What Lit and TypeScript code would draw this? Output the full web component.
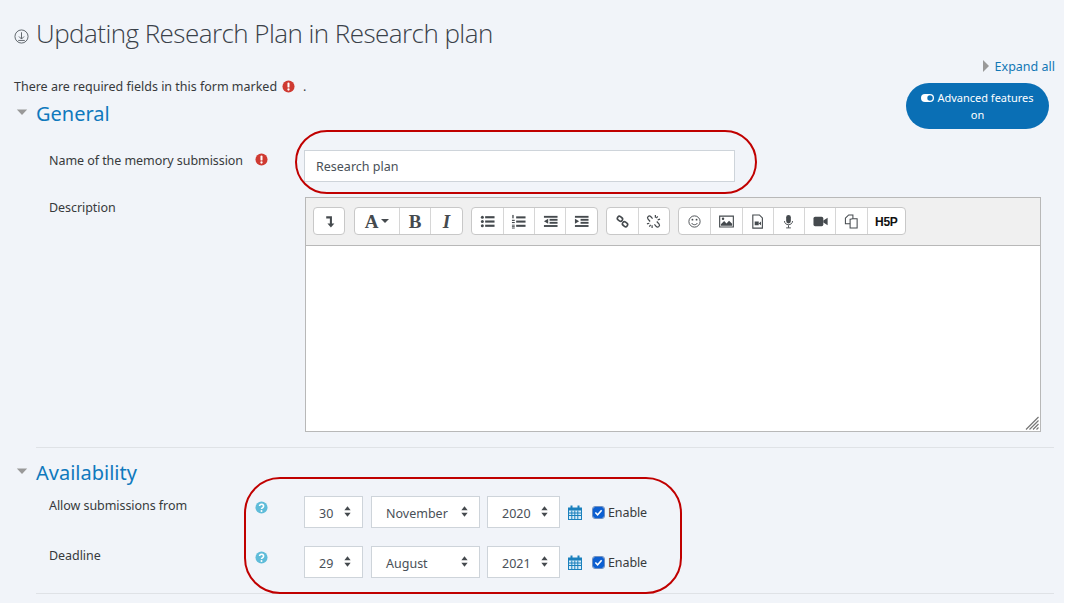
import { LitElement, html, css, svg } from "lit";
import { customElement } from "lit/decorators.js";

const alertIcon = html`<svg class="alert" viewBox="0 0 14 14"><circle cx="7" cy="7" r="6.5" fill="#cf3a32"/><rect x="5.9" y="2.8" width="2.2" height="5.4" rx="1" fill="#fff"/><circle cx="7" cy="10.2" r="1.25" fill="#fff"/></svg>`;
const helpIcon = html`<svg class="alert" viewBox="0 0 14 14"><circle cx="7" cy="7" r="6.5" fill="#5fbcd9"/><path d="M4.9 5.4a2.2 2 0 1 1 3.3 1.8c-.8.5-1.2.8-1.2 1.5" fill="none" stroke="#fff" stroke-width="1.7"/><circle cx="7" cy="10.7" r="1.05" fill="#fff"/></svg>`;
const caret = html`<svg class="caret" viewBox="0 0 14 8"><path d="M1 .5h12L7 7z" fill="#999"/></svg>`;
const updown = html`<svg class="ud" viewBox="0 0 8 12"><path d="M4 0l3.6 4.5H.4zM4 12L.4 7.5h7.2z" fill="#454a4e"/></svg>`;
const calendar = html`<svg class="cal" viewBox="0 0 14 15"><path d="M0 2.5h14V15H0z" fill="#1a80bd"/><path d="M1 5.5h12V14H1z" fill="#d8ecf8"/><path d="M1 8h12M1 10.5h12M3.8 5.5V14M6.8 5.5V14M9.8 5.5V14" stroke="#1a80bd" fill="none"/><path d="M3.5.5v3M10.5.5v3" stroke="#1a80bd" stroke-width="2" fill="none"/></svg>`;

const ic = (body: unknown, w = 16) => html`<svg class="ico" width="${w}" height="16" viewBox="0 0 16 16">${body}</svg>`;
const c = "#454a4e";
const icons = {
  collapse: ic(svg`<path d="M4.5 3.6h5V11" fill="none" stroke="${c}" stroke-width="2.2"/><path d="M5.8 10h7.4L9.5 14.5z" fill="${c}"/>`),
  ul: ic(svg`<g fill="${c}"><circle cx="2.5" cy="3.5" r="1.6"/><circle cx="2.5" cy="8" r="1.6"/><circle cx="2.5" cy="12.5" r="1.6"/><rect x="5.5" y="2.3" width="10" height="2.3"/><rect x="5.5" y="6.9" width="10" height="2.3"/><rect x="5.5" y="11.4" width="10" height="2.3"/></g>`),
  ol: ic(svg`<g fill="${c}"><rect x="5.5" y="2.5" width="10" height="2.2"/><rect x="5.5" y="7" width="10" height="2.2"/><rect x="5.5" y="11.5" width="10" height="2.2"/><rect x="1.4" y="1" width="1.4" height="3.6"/><rect x="1" y="6.2" width="3" height="1.2"/><rect x="1" y="8.5" width="3" height="1.2"/><rect x="1" y="11.4" width="3" height="1"/><rect x="1" y="13" width="3" height="1"/><rect x="1" y="14.5" width="3" height="1"/></g>`),
  outdent: ic(svg`<g fill="${c}"><rect x="1" y="2" width="14.5" height="2"/><rect x="7" y="5.2" width="8.5" height="2"/><rect x="7" y="8.4" width="8.5" height="2"/><rect x="1" y="11.8" width="14.5" height="2"/><path d="M5.5 5v5.5L1 7.8z"/></g>`),
  indent: ic(svg`<g fill="${c}"><rect x="1" y="2" width="14.5" height="2"/><rect x="7" y="5.2" width="8.5" height="2"/><rect x="7" y="8.4" width="8.5" height="2"/><rect x="1" y="11.8" width="14.5" height="2"/><path d="M1 5v5.5L5.5 7.8z"/></g>`),
  link: ic(svg`<g fill="none" stroke="${c}" stroke-width="1.7"><rect x="2.4" y="3" width="5.8" height="4.2" rx="2" transform="rotate(38 5.3 5.1)"/><rect x="7.8" y="8.8" width="5.8" height="4.2" rx="2" transform="rotate(38 10.7 10.9)"/></g>`),
  unlink: ic(svg`<g fill="none" stroke="${c}" stroke-width="1.3"><path d="M7 5L5 2.7a2 2 0 0 0-3 2.6L4.4 8M9 11l2 2.4a2 2 0 0 0 3-2.6L11.5 8"/><path d="M10 1v3M12.5 2.5l-1.5 2M15 5.5l-2.5.8M1 10.5l2.5-.6M3.5 13.5l1.5-2M6.5 15v-3"/></g>`),
  smile: ic(svg`<g fill="none" stroke="${c}" stroke-width="1"><circle cx="8" cy="8" r="6"/><path d="M4.8 9.6c1.6 2.4 4.8 2.4 6.4 0"/></g><circle cx="5.8" cy="6" r="1" fill="${c}"/><circle cx="10.2" cy="6" r="1" fill="${c}"/>`),
  image: ic(svg`<path d="M.7 2.2h14.6v11.6H.7z" fill="#fff" stroke="${c}" stroke-width="1.2"/><path d="M2 12.6V11l3.5-3.5 2.5 2.5 2.7-2.8 3.3 3.2v2.2z" fill="${c}"/><circle cx="4.3" cy="5" r="1.3" fill="${c}"/>`),
  file: ic(svg`<path d="M3 1h7l3.2 3.2V15H3z" fill="#fff" stroke="${c}" stroke-width="1.2"/><rect x="5" y="8" width="4.3" height="4" fill="${c}"/><path d="M9.3 10l2.4-2v4z" fill="${c}"/>`),
  mic: ic(svg`<rect x="5.5" y="1" width="5" height="9" rx="2.5" fill="${c}"/><path d="M3.7 7.5c0 5.2 8.6 5.2 8.6 0M8 12v2.6M5.5 14.8h5" fill="none" stroke="${c}" stroke-width="1"/>`),
  video: ic(svg`<rect x=".5" y="3" width="10.5" height="10" rx="1.8" fill="${c}"/><path d="M11 7l4.6-3v8L11 9z" fill="${c}"/>`),
  copy: ic(svg`<g fill="#fff" stroke="${c}" stroke-width="1.1"><path d="M1.5 4.5L5 1h4.5v9.5h-8z"/><path d="M6.5 5.5L9.5 5h4.5v10H6.5z"/></g>`),
};

@customElement("app-root")
export class AppRoot extends LitElement {
  static styles = css`
    :host { display: block; width: 1069px; height: 603px; background: #fff; overflow: hidden; font-family: "Noto Sans", sans-serif; color: #373a3c; font-size: 12.5px; }
    .page { position: relative; width: 1064px; height: 603px; background: #f1f4f9; box-sizing: border-box; padding: 18px 10px 0 14px; }
    svg { display: block; flex: none; }
    .title { display: flex; align-items: center; gap: 7px; height: 32px; padding-bottom: 2px; box-sizing: border-box; }
    .title svg { width: 15px; height: 15px; margin-top: 6px; }
    h2 { margin: 0; font-weight: 300; font-size: 26px; line-height: 32px; color: #3a4149; font-family: "Open Sans", sans-serif; letter-spacing: -0.545px; white-space: nowrap; }
    .top { display: flex; justify-content: space-between; height: 80px; }
    .top-left { padding-top: 27px; }
    .req-line { display: flex; align-items: center; height: 18px; letter-spacing: -.01px; }
    .req-line .alert { margin: 0 8px 0 5px; }
    .alert { width: 13px; height: 13px; }
    .sect { display: flex; align-items: center; height: 30px; }
    .top-left .sect { margin-top: 4px; }
    .sect .caret { width: 12px; height: 7px; margin: 0 8px 4px 2px; }
    .sect span { font-size: 20px; color: #0f79bd; line-height: 30px; }
    .top-right { display: flex; flex-direction: column; align-items: flex-end; padding-top: 7px; }
    .expand { display: flex; align-items: center; gap: 6px; color: #1177b5; height: 18px; margin-right: -1px; }
    .expand i { width: 0; height: 0; border-left: 6px solid #999; border-top: 6px solid transparent; border-bottom: 6px solid transparent; }
    .adv { width: 143px; height: 46px; border-radius: 23px; background: #0a6fb5; color: #fff; font-size: 11px; margin: 8px 5px 0 0; display: flex; flex-direction: column; align-items: center; justify-content: center; line-height: 17px; }
    .adv div { display: flex; align-items: center; gap: 3px; }
    .adv svg { width: 13px; height: 8px; }
    .row { display: grid; grid-template-columns: 206px 49px 1fr; margin-left: 35px; }
    .lab { white-space: nowrap; letter-spacing: -.06px; line-height: 18px; padding-top: 2px; }
    .input { width: 431px; height: 32px; box-sizing: border-box; background: #fff; border: 1px solid #ced4da; padding: 1px 0 0 11px; line-height: 30px; font-size: 12.5px; color: #495057; }
    .r1 { padding-top: 20px; }
    .r1 .ic { padding-top: 3px; }
    .r2 { margin-top: 15px; }
    .editor { width: 736px; box-sizing: border-box; margin-left: 1px; border: 1px solid #b8b8b8; }
    .bar { height: 48px; box-sizing: border-box; background: #f0f0f0; border-bottom: 1px solid #b8b8b8; display: flex; gap: 8px; padding: 9px 0 0 7px; }
    .grp { display: flex; height: 28px; box-sizing: border-box; border: 1px solid #c8c8c8; border-radius: 4px; background: #fff; }
    .grp.first .btn { width: 30px; }
    .grp.second { margin-left: 1px; }
    .btn { width: 31.25px; display: flex; align-items: center; justify-content: center; border-left: 1px solid #d6d6d6; box-sizing: border-box; color: #454a4e; font: 700 19px/1 "Liberation Serif", serif; }
    .btn:first-child { border-left: 0; }
    .btn .ico { width: 15px; height: 15px; }
    .btn.wide { width: 44px; gap: 3px; }
    .btn.it { font-style: italic; }
    .btn.h5p { font: 900 12px/1 "Liberation Sans", sans-serif; color: #111; letter-spacing: -.3px; width: 38.5px; padding-top: 2px; }
    .btn i { border-top: 4px solid #454a4e; border-left: 4px solid transparent; border-right: 4px solid transparent; }
    .area { position: relative; height: 185px; background: #fff; }
    .grip { position: absolute; right: 1px; bottom: 1px; width: 14px; height: 14px; }
    hr { border: 0; border-top: 1px solid #dfe2e6; margin: 0 0 0 22px; }
    .h1 { margin-top: 15px; }
    .sect2 { margin-top: 10px; }
    .dates { padding-top: 8px; }
    .r3 { height: 50px; align-items: start; }
    .r3 .lab { padding-top: 1px; }
    .r3 .ic { padding-top: 5px; }
    .sel-row { display: flex; align-items: center; height: 32px; }
    .sel { height: 32px; box-sizing: border-box; background: #fff; border: 1px solid #ced4da; display: flex; align-items: center; justify-content: space-between; color: #495057; margin-right: 8px; padding: 0 11px 0 14px; }
    .sel span { padding-top: 2px; }
    .sel .ud { width: 7px; height: 11px; margin-top: -1px; }
    .d { width: 59px; } .m { width: 109px; margin-right: 7px; } .y { width: 73px; margin-right: 8px; }
    .cal { width: 14px; height: 15px; }
    .chk { width: 11px; height: 11px; margin: 0 4px 0 11px; background: #0d5fd1; border-radius: 2px; display: flex; align-items: center; justify-content: center; outline: 1px solid #6e8fc0; }
    .chk svg { width: 9px; height: 9px; }
    .en { letter-spacing: -.1px; }
    .hr2 { margin-top: -3px; }
    .oval { position: absolute; box-sizing: border-box; border: 2px solid #c00000; pointer-events: none; }
    .o1 { left: 295px; top: 130px; width: 462px; height: 64px; border-radius: 32px; }
    .o2 { left: 244px; top: 477px; width: 438px; height: 117px; border-radius: 36px; }
  `;

  private dateRow(label: string, d: string, m: string, y: string) {
    return html`<div class="row r3">
      <div class="lab">${label}</div>
      <div class="ic">${helpIcon}</div>
      <div class="sel-row">
        <div class="sel d"><span>${d}</span>${updown}</div>
        <div class="sel m"><span>${m}</span>${updown}</div>
        <div class="sel y"><span>${y}</span>${updown}</div>
        ${calendar}
        <div class="chk"><svg viewBox="0 0 10 10"><path d="M1.5 5l2.5 2.5 4.5-5" fill="none" stroke="#fff" stroke-width="1.8"/></svg></div>
        <span class="en">Enable</span>
      </div>
    </div>`;
  }

  render() {
    return html`<div class="page">
      <div class="title">
        <svg viewBox="0 0 16 16"><g fill="none" stroke="#5a6066" stroke-width="1"><circle cx="8" cy="8" r="7"/><path d="M8 3.5v7M5.3 8L8 10.7 10.7 8M4.5 12.2h7"/></g></svg>
        <h2>Updating Research Plan in Research plan</h2>
      </div>
      <div class="top">
        <div class="top-left">
          <div class="req-line">There are required fields in this form marked ${alertIcon} .</div>
          <div class="sect">${caret}<span>General</span></div>
        </div>
        <div class="top-right">
          <div class="expand"><i></i>Expand all</div>
          <div class="adv">
            <div><svg viewBox="0 0 13 8"><rect width="13" height="8" rx="4" fill="#fff"/><circle cx="9" cy="4" r="2.7" fill="#0a6fb5"/></svg>Advanced features</div>
            on
          </div>
        </div>
      </div>
      <div class="row r1">
        <div class="lab">Name of the memory submission</div>
        <div class="ic">${alertIcon}</div>
        <div class="input">Research plan</div>
      </div>
      <div class="row r2">
        <div class="lab">Description</div>
        <div></div>
        <div class="editor">
          <div class="bar">
            <div class="grp first"><div class="btn">${icons.collapse}</div></div>
            <div class="grp second"><div class="btn wide">A<i></i></div><div class="btn">B</div><div class="btn it">I</div></div>
            <div class="grp"><div class="btn">${icons.ul}</div><div class="btn">${icons.ol}</div><div class="btn">${icons.outdent}</div><div class="btn">${icons.indent}</div></div>
            <div class="grp"><div class="btn">${icons.link}</div><div class="btn">${icons.unlink}</div></div>
            <div class="grp"><div class="btn">${icons.smile}</div><div class="btn">${icons.image}</div><div class="btn">${icons.file}</div><div class="btn">${icons.mic}</div><div class="btn">${icons.video}</div><div class="btn">${icons.copy}</div><div class="btn h5p">H5P</div></div>
          </div>
          <div class="area"><svg class="grip" viewBox="0 0 14 14"><path d="M13.5 1L1 13.5M13.5 4.5L4.5 13.5M13.5 8L8 13.5M13.5 11.5L11.5 13.5" stroke="#777" stroke-width="1.2"/></svg></div>
        </div>
      </div>
      <hr class="h1" />
      <div class="sect sect2">${caret}<span>Availability</span></div>
      <div class="dates">
        ${this.dateRow("Allow submissions from", "30", "November", "2020")}
        ${this.dateRow("Deadline", "29", "August", "2021")}
      </div>
      <hr class="hr2" />
      <div class="oval o1"></div>
      <div class="oval o2"></div>
    </div>`;
  }
}
